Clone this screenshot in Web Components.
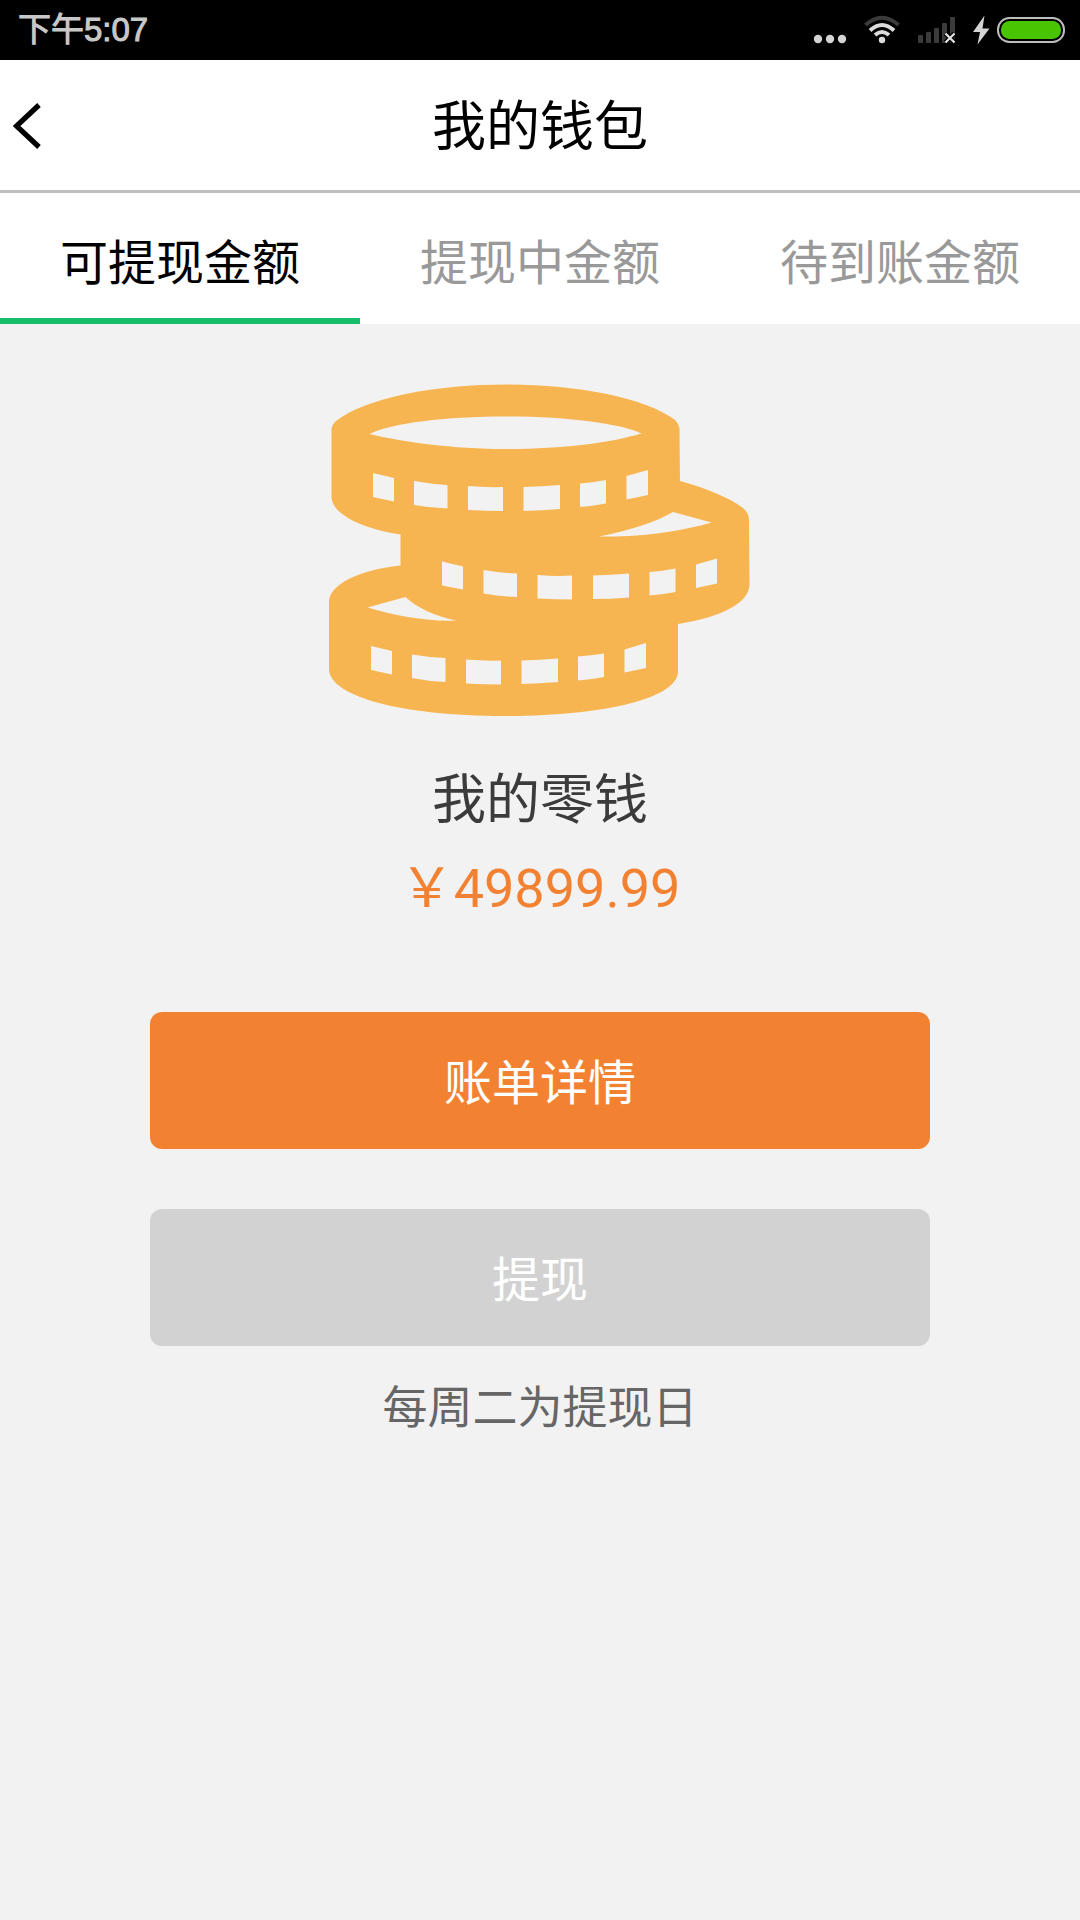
<!DOCTYPE html>
<html lang="zh-CN">
<head>
<meta charset="utf-8">
<meta name="viewport" content="width=device-width, initial-scale=1">
<title>我的钱包</title>
<style>
  html, body { margin: 0; min-height: 100%; }
  body {
    background: #f2f2f2;
    font-family: Roboto, "Noto Sans CJK SC", sans-serif;
    color: #000;
  }
</style>
</head>
<body>
<wallet-page></wallet-page>

<script>
const define = (name, html, setup) => {
  const template = document.createElement('template');
  template.innerHTML = html;
  customElements.define(name, class extends HTMLElement {
    constructor() {
      super();
      this.attachShadow({ mode: 'open' }).append(template.content.cloneNode(true));
    }
    connectedCallback() { if (setup) setup(this, this.shadowRoot); }
  });
};

define('status-bar', `
  <style>
    :host {
      display: flex; align-items: center; justify-content: space-between;
      height: 60px; padding: 0 15px 0 18px; box-sizing: border-box;
      background: #000; color: #c8c8c8;
    }
    time { font: 400 33px/60px "Liberation Sans", "Noto Sans CJK SC", sans-serif; -webkit-text-stroke: 1px #c8c8c8; }
    .icons, .power { display: flex; align-items: center; }
    .icons { gap: 18px; }
    .power { gap: 7px; }
    svg { display: block; height: 30px; overflow: visible; }
  </style>
  <time datetime="17:07"><slot></slot></time>
  <div class="icons">
    <svg width="32" viewBox="814 15 32 30" fill="#d4d4d4" aria-hidden="true">
      <circle cx="818" cy="39" r="4.2"/><circle cx="830" cy="39" r="4.2"/><circle cx="842" cy="39" r="4.2"/>
    </svg>
    <svg width="36" viewBox="864 15 36 30" fill="none" stroke="#dcdcdc" stroke-width="4" aria-hidden="true">
      <path d="M865.5 25 Q882 10.500 898.500 25" stroke="#3b3b3b"/>
      <path d="M870 30.500 Q882 19.500 894 30.500"/>
      <path d="M875 35 Q882 29 889 35"/>
      <circle cx="882" cy="40" r="3.200" fill="#dcdcdc" stroke="none"/>
    </svg>
    <svg width="38" viewBox="918 15 38 30" fill="#3b3b3b" aria-hidden="true">
      <rect x="918" y="35" width="5" height="8" rx="1"/><rect x="926" y="32" width="5" height="11" rx="1"/>
      <rect x="934" y="28" width="5" height="15" rx="1"/><rect x="942" y="23" width="5" height="20" rx="1"/>
      <rect x="950" y="17" width="5" height="26" rx="1"/>
      <path d="M945.500 33.500 L954.500 42.500 M954.500 33.500 L945.500 42.500" stroke="#000" stroke-width="5"/>
      <path d="M945.500 33.500 L954.500 42.500 M954.500 33.500 L945.500 42.500" stroke="#e4e4e4" stroke-width="2.200"/>
    </svg>
    <div class="power">
      <svg width="16" viewBox="974 15 16 30" fill="#d4d4d4" aria-hidden="true">
        <path d="M984.500 15.500 L973 32 H980 L977.500 44.500 L989.500 28.500 H982.500 Z"/>
      </svg>
      <svg width="68" viewBox="997 15 68 30" aria-hidden="true">
        <rect x="998" y="18" width="66" height="24" rx="11.500" fill="none" stroke="#bdbdbd" stroke-width="2"/>
        <rect x="1001" y="21" width="60" height="18" rx="8.500" fill="#48c400"/>
      </svg>
    </div>
  </div>
`);

define('nav-header', `
  <style>
    :host {
      display: grid; grid-template-columns: 1fr auto 1fr; align-items: center;
      height: 133px; box-sizing: border-box;
      background: #fff; border-bottom: 3px solid #bfbfbf;
    }
    button { justify-self: start; padding: 2px 13px 0; border: 0; background: none; height: 130px; }
    svg { display: block; }
    h1 { margin: 0; padding-top: 6px; font-size: 54px; line-height: 80px; font-weight: 400; }
  </style>
  <button type="button" aria-label="返回">
    <svg width="28" height="46" viewBox="13 103 28 46" fill="none" stroke="#000" stroke-width="5.200">
      <path d="M39 105 L16.500 126 L39 147"/>
    </svg>
  </button>
  <h1><slot></slot></h1>
`);

define('wallet-tab', `
  <style>
    :host { display: block; flex: 1; }
    button {
      display: block; width: 100%; padding: 34px 0 17px; border: 0;
      border-bottom: 6px solid transparent; background: none;
      font: inherit; font-size: 48px; line-height: 74px; color: #999;
    }
    :host([selected]) button { color: #000; border-color: #18bd69; }
  </style>
  <button type="button" role="tab"><slot></slot></button>
`, (host, root) => {
  root.querySelector('button').setAttribute('aria-selected', host.hasAttribute('selected'));
});

define('wallet-tabs', `
  <style>:host { display: flex; background: #fff; }</style>
  <slot></slot>
`, host => {
  host.setAttribute('role', 'tablist');
  host.onclick = event => {
    const chosen = event.target.closest('wallet-tab');
    if (!chosen) return;
    for (const tab of host.children) {
      tab.toggleAttribute('selected', tab === chosen);
      tab.shadowRoot.querySelector('button').setAttribute('aria-selected', tab === chosen);
    }
  };
});

define('coin-stack', `
  <style>:host { display: block; } svg { display: block; overflow: visible; }</style>
  <svg width="420" height="333" viewBox="330 384 420 333" aria-hidden="true">
    <path fill="#f7b551" fill-rule="evenodd" d="
      M331.500 430 Q331.500 425 336 421 C367 397 437 384.500 507 384.500
      C578 384.500 646 398 675 420 Q679.500 425 679.500 430 L680 481
      C706 488 730 498 743 508 Q749 513 749 520 L749.500 584
      C750 602 723 617 678 624 L678 672
      C677 698 606 716 505 716 C399 716 331 696 329 670 L329 602
      C329 585 358 570 400.500 565.500 L400.500 534.500
      C359 528 331.500 513 331.500 497 Z
      M369.500 434 C392 423 444 416.500 507 416.500 C570 416.500 622 424 641.500 433.500
      C609 443 563 449 507 449 C452 449 403 442 369.500 434 Z
      M673 512 L711.500 522.500 C682 531 641 537.500 599 536.500 C632 530 658 521 673 512 Z
      M367.500 607.500 L405.500 597 C417 608 435 616 456 620.500 C427 622 393 615 367.500 607.500 Z
      M373 473 L394 478 V501.500 L373 497 Z
      M414 481 Q431 484 447.500 485 V508.500 Q431 508 414 505 Z
      M468 486 Q485 487.500 503 487 V511 Q485 511 468 510 Z
      M523.500 487 Q542 486.500 560 485 V509 Q542 510.500 523.500 511 Z
      M580 483.500 Q593 482.500 606 480 V503.500 Q593 506 580 507 Z
      M626.500 476 L648 470 V495 L626.500 499.500 Z
      M442 561.500 L463 566.500 V589.500 L442 585.500 Z
      M483.500 570 Q500 573 517 573.500 V597 Q500 596.500 483.500 593.500 Z
      M537.500 575 Q555 576.500 572 575.500 V599.500 Q555 599.500 537.500 598.500 Z
      M593 575.500 Q611 575 629 573.500 V597.500 Q611 599 593 599 Z
      M649.500 572 Q663 571 675.500 568.500 V592 Q663 594.500 649.500 595.500 Z
      M696 564.500 L717 558.500 V583.500 L696 588 Z
      M371 646 L392 651 V674.500 L371 670 Z
      M412 654.500 Q429 657.500 445.500 658 V682 Q429 681.500 412 678 Z
      M466 659.500 Q483 661 501 660.500 V684.500 Q483 684.500 466 683.500 Z
      M521.500 660.500 Q540 660 558 658.500 V682 Q540 683.500 521.500 684 Z
      M578 656.500 Q591 655.500 604 653.500 V677 Q591 679.500 578 680.500 Z
      M624.500 649.500 L646 643 V668 L624.500 672.500 Z"/>
  </svg>
`);

define('wallet-balance', `
  <style>
    :host { display: flex; flex-direction: column; align-items: center; padding-top: 60px; }
    h2, p { margin: 0; font-size: 54px; font-weight: 400; line-height: 80px; }
    h2 { margin-top: 44px; color: #3b3b3b; }
    p { margin-top: 8px; color: #f28232; }
  </style>
  <coin-stack></coin-stack>
  <h2><slot name="label"></slot></h2>
  <p><slot name="amount"></slot></p>
`);

define('action-button', `
  <style>
    :host { display: block; }
    button {
      display: block; width: 100%; height: 137px; padding: 6px 0 0;
      border: 0; border-radius: 12px; background: #f28232; color: #fff;
      font: inherit; font-size: 48px; line-height: 72px;
    }
    button:disabled { background: #d2d2d2; color: #fff; }
  </style>
  <button type="button"><slot></slot></button>
`, (host, root) => {
  root.querySelector('button').disabled = host.hasAttribute('disabled');
});

define('wallet-page', `
  <style>
    :host { display: block; }
    .actions { display: flex; flex-direction: column; gap: 60px; padding: 83px 150px 0; }
    .note { margin: 30px 0 0; text-align: center; font-size: 45px; line-height: 66px; color: #666; }
  </style>
  <status-bar>下午5:07</status-bar>
  <nav-header>我的钱包</nav-header>
  <wallet-tabs>
    <wallet-tab selected>可提现金额</wallet-tab>
    <wallet-tab>提现中金额</wallet-tab>
    <wallet-tab>待到账金额</wallet-tab>
  </wallet-tabs>
  <main>
    <wallet-balance>
      <span slot="label">我的零钱</span>
      <span slot="amount">&#xFFE5;49899.99</span>
    </wallet-balance>
    <div class="actions">
      <action-button>账单详情</action-button>
      <action-button disabled>提现</action-button>
    </div>
    <p class="note">每周二为提现日</p>
  </main>
`);
</script>
</body>
</html>
